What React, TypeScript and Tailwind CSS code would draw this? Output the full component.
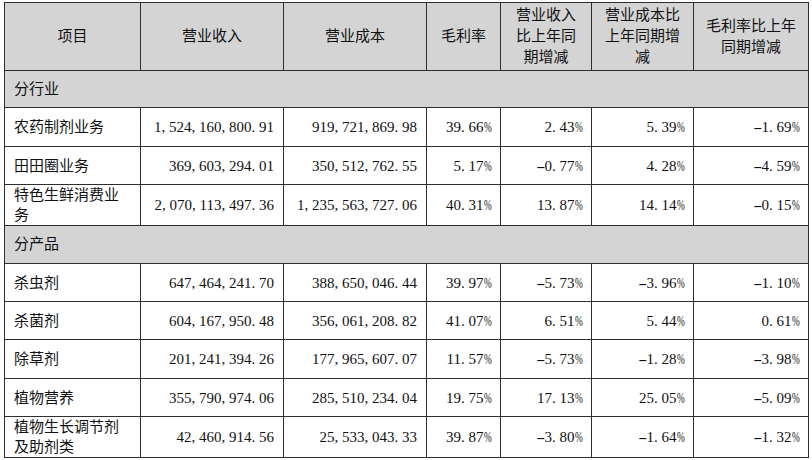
import React from 'react';

type Row = { name: string; v: string[]; h: string };

const industry: Row[] = [
  { name: '农药制剂业务', v: ['1,524,160,800.91', '919,721,869.98', '39.66%', '2.43%', '5.39%', '-1.69%'], h: 'h-[39px]' },
  { name: '田田圈业务', v: ['369,603,294.01', '350,512,762.55', '5.17%', '-0.77%', '4.28%', '-4.59%'], h: 'h-[38px]' },
  { name: '特色生鲜消费业务', v: ['2,070,113,497.36', '1,235,563,727.06', '40.31%', '13.87%', '14.14%', '-0.15%'], h: 'h-[41px]' },
];

const products: Row[] = [
  { name: '杀虫剂', v: ['647,464,241.70', '388,650,046.44', '39.97%', '-5.73%', '-3.96%', '-1.10%'], h: 'h-[38px]' },
  { name: '杀菌剂', v: ['604,167,950.48', '356,061,208.82', '41.07%', '6.51%', '5.44%', '0.61%'], h: 'h-[38px]' },
  { name: '除草剂', v: ['201,241,394.26', '177,965,607.07', '11.57%', '-5.73%', '-1.28%', '-3.98%'], h: 'h-[39px]' },
  { name: '植物营养', v: ['355,790,974.06', '285,510,234.04', '19.75%', '17.13%', '25.05%', '-5.09%'], h: 'h-[38px]' },
  { name: '植物生长调节剂及助剂类', v: ['42,460,914.56', '25,533,043.33', '39.87%', '-3.80%', '-1.64%', '-1.32%'], h: 'h-[40px]' },
];

// SimSun-like half-width punctuation: every symbol takes one digit cell
function Num({ value }: { value: string }) {
  return (
    <span className="whitespace-nowrap">
      {value.split('').map((c, i) => {
        if (c === ',' || c === '.')
          return <span key={i} className="inline-block w-[7.5px] text-left">{c}</span>;
        if (c === '%')
          return <span key={i} className="inline-block w-[7.5px] origin-left scale-x-[0.62]">{c}</span>;
        if (c === '-')
          return <span key={i} className="inline-block w-[7.5px] text-center scale-x-[1.8]">{c}</span>;
        return <span key={i}>{c}</span>;
      })}
    </span>
  );
}

const cell = 'border border-[#2e2e2e] p-0';

function DataRow({ row }: { row: Row }) {
  return (
    <tr className={row.h}>
      <td className={`${cell} pl-[9px] pr-[9px] text-left leading-[20px]`}>{row.name}</td>
      {row.v.map((v, i) => (
        <td key={i} className={`${cell} pr-[9px] text-right leading-[20px]`}>
          <Num value={v} />
        </td>
      ))}
    </tr>
  );
}

export default function App() {
  return (
    <div
      className="h-[460px] w-[812px] bg-white pl-[4px] pt-[2px] text-[15px] text-[#111]"
      style={{ fontFamily: '"Liberation Serif", "Noto Sans CJK SC", serif' }}
    >
      <table className="w-[804px] table-fixed border-collapse">
        <colgroup>
          <col className="w-[136px]" />
          <col className="w-[143px]" />
          <col className="w-[143px]" />
          <col className="w-[74px]" />
          <col className="w-[91px]" />
          <col className="w-[102px]" />
          <col className="w-[115px]" />
        </colgroup>
        <thead>
          <tr className="h-[68px] bg-[#d4d4d4] text-center leading-[21px]">
            <td className={cell}>项目</td>
            <td className={cell}>营业收入</td>
            <td className={cell}>营业成本</td>
            <td className={cell}>毛利率</td>
            <td className={cell}>营业收入<br />比上年同<br />期增减</td>
            <td className={cell}>营业成本比<br />上年同期增<br />减</td>
            <td className={cell}>毛利率比上年<br />同期增减</td>
          </tr>
        </thead>
        <tbody>
          <tr className="h-[37px] bg-[#d4d4d4]">
            <td colSpan={7} className={`${cell} pl-[9px]`}>分行业</td>
          </tr>
          {industry.map((r) => <DataRow key={r.name} row={r} />)}
          <tr className="h-[38px] bg-[#d4d4d4]">
            <td colSpan={7} className={`${cell} pl-[9px]`}>分产品</td>
          </tr>
          {products.map((r) => <DataRow key={r.name} row={r} />)}
        </tbody>
      </table>
    </div>
  );
}
